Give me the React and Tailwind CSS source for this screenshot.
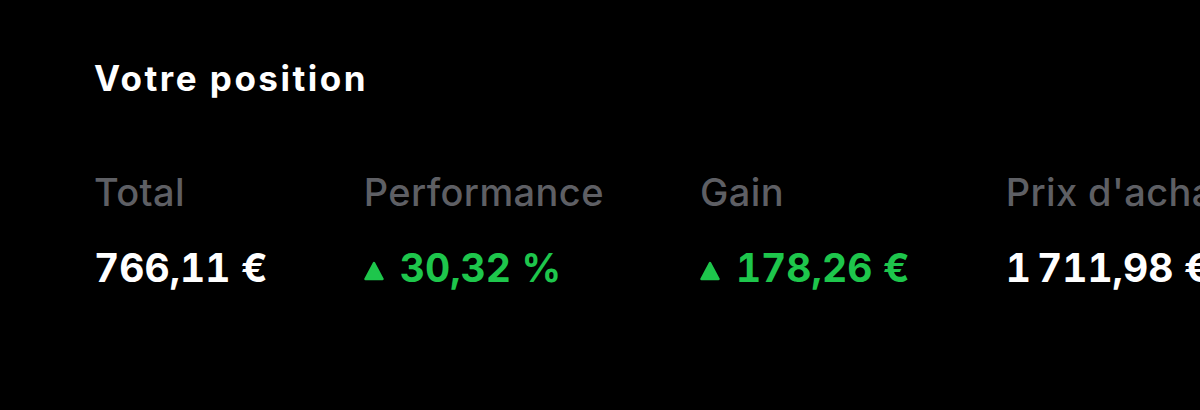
import React from 'react';

const stats = [
  { label: 'Total', value: '766,11 €' },
  { label: 'Performance', value: '30,32 %', up: true },
  { label: 'Gain', value: '178,26 €', up: true },
  { label: "Prix d'achat", value: '1\u202F711,98 €' },
];

const UpArrow = () => (
  <svg width="20" height="20" viewBox="0 0 20 20" className="mr-[16px] mt-[5px] shrink-0">
    <path d="M10 2 L18.5 18 L1.5 18 Z" fill="currentColor" stroke="currentColor" strokeWidth="2.5" strokeLinejoin="round" />
  </svg>
);

export default function App() {
  return (
    <div className="w-[1200px] h-[410px] bg-black overflow-hidden text-white" style={{ fontFamily: 'Inter, "Noto Sans", sans-serif' }}>
      <div className="pl-[94px] pt-[55px]">
        <h2 className="text-[35px] font-bold leading-[46px] tracking-[2.5px]">Votre position</h2>
        <div className="mt-[68px] flex gap-[96px] whitespace-nowrap">
          {stats.map((s) => (
            <div key={s.label} className="flex flex-col shrink-0">
              <span className="text-[38px] leading-[46px] font-medium text-[#5e5f64] tracking-[0.4px]">{s.label}</span>
              <span className={`mt-[30px] flex items-center text-[39px] leading-[46px] font-bold tabular-nums ${s.up ? 'text-[#1ec64c]' : 'text-white'}`}>
                {s.up && <UpArrow />}
                {s.value}
              </span>
            </div>
          ))}
        </div>
      </div>
    </div>
  );
}
